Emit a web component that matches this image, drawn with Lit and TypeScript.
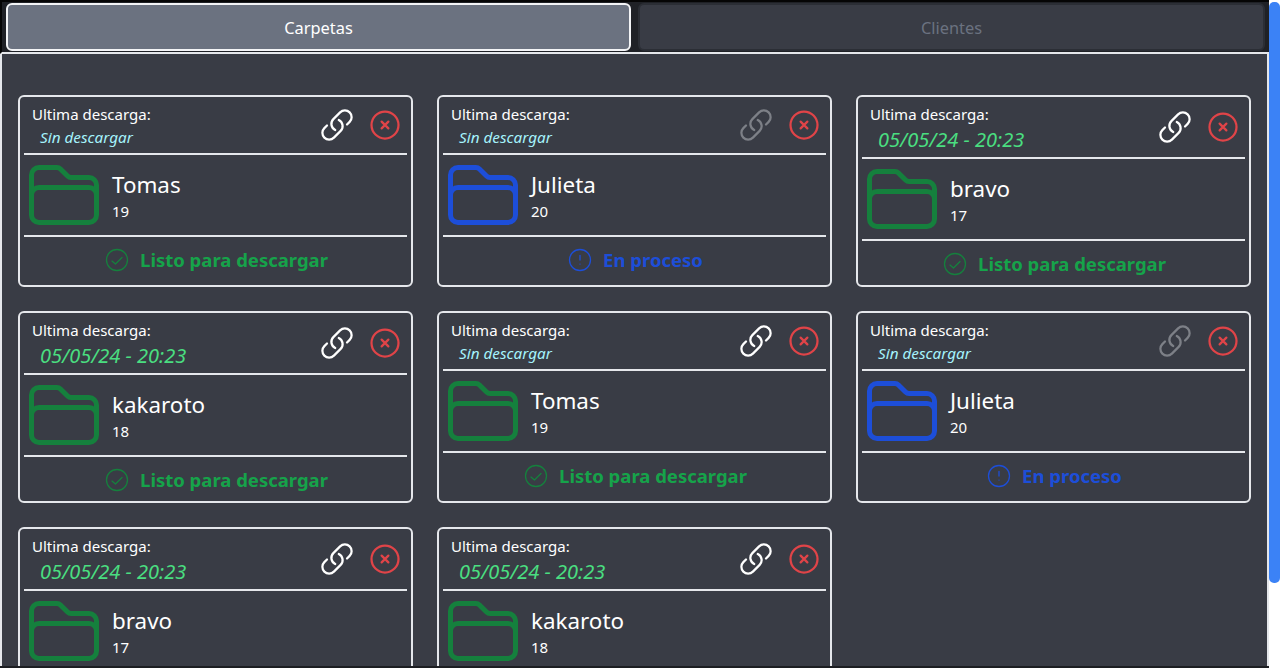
import { LitElement, css, html, svg } from 'lit'
import { customElement, property, state } from 'lit/decorators.js'

type Carpeta = { nombre: string; edad: number; fecha?: string; enProceso?: boolean; sinLink?: boolean }

const carpetas: Carpeta[] = [
  { nombre: 'Tomas', edad: 19 },
  { nombre: 'Julieta', edad: 20, enProceso: true, sinLink: true },
  { nombre: 'bravo', edad: 17, fecha: '05/05/24 - 20:23' },
  { nombre: 'kakaroto', edad: 18, fecha: '05/05/24 - 20:23' },
  { nombre: 'Tomas', edad: 19 },
  { nombre: 'Julieta', edad: 20, enProceso: true, sinLink: true },
  { nombre: 'bravo', edad: 17, fecha: '05/05/24 - 20:23' },
  { nombre: 'kakaroto', edad: 18, fecha: '05/05/24 - 20:23' },
]

const icon = (d: string, cls: string) => html`
  <svg class=${cls} viewBox="0 0 24 24" fill="none" stroke="currentColor" stroke-linecap="round" stroke-linejoin="round">
    ${svg`<path d=${d}></path>`}
  </svg>
`

const FOLDER = 'M2.25 12.75V12A2.25 2.25 0 014.5 9.75h15A2.25 2.25 0 0121.75 12v.75m-8.69-6.44l-2.12-2.12a1.5 1.5 0 00-1.061-.44H4.5A2.25 2.25 0 002.25 6v12a2.25 2.25 0 002.25 2.25h15A2.25 2.25 0 0021.75 18V9a2.25 2.25 0 00-2.25-2.25h-5.379a1.5 1.5 0 01-1.06-.44z'
const LINK = 'M13.19 8.688a4.5 4.5 0 011.242 7.244l-4.5 4.5a4.5 4.5 0 01-6.364-6.364l1.757-1.757m13.35-.622l1.757-1.757a4.5 4.5 0 00-6.364-6.364l-4.5 4.5a4.5 4.5 0 001.242 7.244'
const X_CIRCLE = 'M9.75 9.75l4.5 4.5m0-4.5l-4.5 4.5M21 12a9 9 0 11-18 0 9 9 0 0118 0z'
const CHECK_CIRCLE = 'M7.7 12.9L10.7 15.4 16.3 9.8M21 12a9 9 0 11-18 0 9 9 0 0118 0z'
const ALERT_CIRCLE = 'M12 8v4m9 0a9 9 0 11-18 0 9 9 0 0118 0zm-9 3.5h.008v.008H12v-.008z'

@customElement('carpeta-card')
export class CarpetaCard extends LitElement {
  @property({ type: Object })
  carpeta!: Carpeta

  static styles = css`
    :host {
      display: block;
    }
    .card {
      box-sizing: border-box;
      height: 100%;
      border: 2px solid #e5e7eb;
      border-radius: 6px;
      color: #fff;
      display: flex;
      flex-direction: column;
    }
    .head {
      display: flex;
      align-items: center;
      justify-content: space-between;
      padding: 4px 4px 4px 8px;
      border-bottom: 2px solid #e5e7eb;
      margin: 0 4px;
    }
    .info {
      margin: 1px 0 -1px;
    }
    .title {
      font-size: 15px;
      line-height: 24px;
    }
    .fecha {
      font-style: italic;
      padding-left: 8px;
      margin: -1px 0 1px;
      font-size: 15.3px;
      line-height: 24px;
      color: #a5f3fc;
    }
    .fecha.ok {
      margin: 0;
      font-size: 20px;
      line-height: 28px;
      color: #4ade80;
    }
    .actions {
      display: flex;
      align-items: center;
      gap: 12px;
    }
    .ic-link, .ic-close {
      width: 36px;
      height: 36px;
      stroke-width: 1.5;
      display: block;
    }
    .ic-close {
      color: #e04448;
    }
    .off {
      color: #7d8087;
    }
    .body {
      display: flex;
      align-items: center;
      gap: 8px;
      margin: 0 4px;
      border-bottom: 2px solid #e5e7eb;
    }
    .ic-folder {
      width: 80px;
      height: 80px;
      stroke-width: 1.5;
      display: block;
      flex: none;
    }
    .verde { color: #15803d; }
    .azul { color: #1d4ed8; }
    .datos {
      padding-top: 1px;
    }
    .nombre {
      font-size: 22.4px;
      line-height: 32px;
    }
    .edad {
      font-size: 15px;
      line-height: 21px;
    }
    .estado {
      display: flex;
      align-items: center;
      justify-content: center;
      gap: 9px;
      padding: 9px 0 7px;
      font-size: 18.5px;
      line-height: 28px;
      font-weight: 700;
    }
    .estado.listo { color: #16a34a; }
    .estado.proceso { color: #1d4ed8; }
    .estado .ic-estado {
      width: 28px;
      height: 28px;
      stroke-width: 1.1;
      display: block;
      color: #15803d;
    }
    .estado.proceso .ic-estado { color: #1d4ed8; }
  `

  render() {
    const c = this.carpeta
    return html`
      <div class="card">
        <div class="head">
          <div class="info">
            <div class="title">Ultima descarga:</div>
            ${c.fecha
              ? html`<div class="fecha ok">${c.fecha}</div>`
              : html`<div class="fecha">Sin descargar</div>`}
          </div>
          <div class="actions">
            <span class=${c.sinLink ? 'off' : ''}>${icon(LINK, 'ic-link')}</span>
            ${icon(X_CIRCLE, 'ic-close')}
          </div>
        </div>
        <div class="body">
          <span class=${c.enProceso ? 'azul' : 'verde'}>${icon(FOLDER, 'ic-folder')}</span>
          <div class="datos">
            <div class="nombre">${c.nombre}</div>
            <div class="edad">${c.edad}</div>
          </div>
        </div>
        ${c.enProceso
          ? html`<div class="estado proceso">${icon(ALERT_CIRCLE, 'ic-estado')}En proceso</div>`
          : html`<div class="estado listo">${icon(CHECK_CIRCLE, 'ic-estado')}Listo para descargar</div>`}
      </div>
    `
  }
}

@customElement('app-root')
export class AppRoot extends LitElement {
  @state()
  _tab = 'carpetas'

  static styles = css`
    :host {
      display: block;
      height: 668px;
      overflow: hidden;
      position: relative;
      font-family: 'Noto Sans', 'Open Sans', sans-serif;
      background: #fff;
    }
    .page {
      box-sizing: border-box;
      width: 1269px;
      height: 668px;
      display: flex;
      flex-direction: column;
      border-bottom: 2px solid #1c1e22;
    }
    .tabs {
      flex: none;
      display: grid;
      grid-template-columns: 625px 1fr;
      gap: 7px;
      padding: 1px 4px 1px 4px;
      background: #1f2126;
      border-top: 2px solid #050505;
      border-left: 2px solid #050505;
      border-bottom: 2px solid #e5e7eb;
    }
    .tab {
      height: 48px;
      box-sizing: border-box;
      border-radius: 6px;
      border: 2px solid #2b2e35;
      background: #393c45;
      color: #6b7280;
      font: inherit;
      font-size: 16.4px;
      padding: 0;
    }
    .tab.on {
      border-color: #f3f4f6;
      background: #6b7280;
      color: #fff;
    }
    .list {
      flex: 1;
      min-height: 0;
      overflow: hidden;
      background: #393c45;
      border-left: 2px solid #e5e7eb;
      border-right: 2px solid #e5e7eb;
      box-sizing: border-box;
      padding: 41px 16px 0 16px;
      display: grid;
      grid-template-columns: repeat(3, 1fr);
      grid-auto-rows: min-content;
      gap: 24px;
    }
    .thumb {
      position: absolute;
      top: 2px;
      right: 0;
      width: 11px;
      height: 581px;
      border-radius: 5px;
      background: #3b82f6;
    }
  `

  render() {
    return html`
      <div class="page">
        <div class="tabs">
          <button class="tab ${this._tab === 'carpetas' ? 'on' : ''}">Carpetas</button>
          <button class="tab ${this._tab === 'clientes' ? 'on' : ''}">Clientes</button>
        </div>
        <div class="list">
          ${carpetas.map((c) => html`<carpeta-card .carpeta=${c}></carpeta-card>`)}
        </div>
      </div>
      <div class="thumb"></div>
    `
  }
}
